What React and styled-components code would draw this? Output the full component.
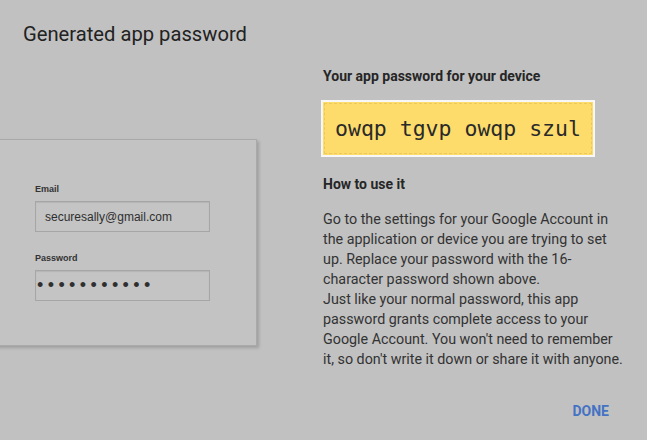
import React from 'react';
import styled, { createGlobalStyle } from 'styled-components';

const GlobalStyle = createGlobalStyle`
    html, body {
        margin: 0;
        padding: 0;
        background: #c1c1c1;
    }
    body {
        font-family: Roboto, "Liberation Sans", sans-serif;
    }
`;

const Page = styled.div`
    width: 647px;
    height: 440px;
    display: flex;
    overflow: hidden;
    background: #c1c1c1;
`;

const LeftCol = styled.div`
    width: 300px;
    padding-left: 23px;
    box-sizing: border-box;
    display: flex;
    flex-direction: column;
`;

const Title = styled.h1`
    margin: 22px 0 0;
    font-size: 20.2px;
    line-height: 24px;
    font-weight: 400;
    color: #222;
`;

const Card = styled.div`
    margin: 93px 0 0 -33px;
    width: 267px;
    height: 207px;
    box-sizing: border-box;
    padding: 43px 0 0 44px;
    background: #c3c3c3;
    border: 1px solid #a9a9a9;
    box-shadow: 2px 2px 3px rgba(0, 0, 0, 0.18);
    font-family: "Liberation Sans", Arial, sans-serif;
`;

const FieldLabel = styled.div`
    font-size: 9px;
    line-height: 12px;
    font-weight: 700;
    color: #333;
    margin-top: ${(p) => (p.first ? '0' : '20px')};
`;

const Field = styled.div`
    margin-top: 6px;
    width: 175px;
    height: 31px;
    box-sizing: border-box;
    padding-left: ${(p) => (p.dots ? '1px' : '9px')};
    display: flex;
    align-items: center;
    background: #c4c4c4;
    border: 1px solid #a6a6a6;
    box-shadow: inset 0 1px 1px rgba(0, 0, 0, 0.08);
    font-size: ${(p) => (p.dots ? '18px' : '12px')};
    letter-spacing: ${(p) => (p.dots ? '4.4px' : '0')};
    color: #2f2f2f;
`;

const RightCol = styled.div`
    flex: 1;
    padding-left: 23px;
    display: flex;
    flex-direction: column;
    color: #262626;
`;

const Heading = styled.div`
    font-size: 14px;
    line-height: 16px;
    font-weight: 700;
    color: #262626;
    margin-top: ${(p) => p.top}px;
`;

const PasswordBox = styled.div`
    margin: 16px 0 0 -2px;
    width: 274px;
    height: 57px;
    box-sizing: border-box;
    border: 2px solid #f7f7f7;
    background: #fddc6b;
    padding: 1px;
`;

const PasswordInner = styled.div`
    height: 100%;
    box-sizing: border-box;
    border: 1px dashed #ecc95c;
    display: flex;
    align-items: center;
    padding-left: 10px;
    font-family: "DejaVu Sans Mono", "Liberation Mono", monospace;
    font-size: 21.5px;
    color: #2a2a2a;
`;

const Body = styled.p`
    margin: 17px 0 0;
    width: 300.5px;
    font-size: 14.3px;
    line-height: 20px;
    color: #333;
`;

const Actions = styled.div`
    display: flex;
    justify-content: flex-end;
    padding-right: 38px;
    margin-top: 34px;
`;

const DoneButton = styled.button`
    border: 0;
    background: none;
    padding: 0;
    font-family: Roboto, "Liberation Sans", sans-serif;
    font-size: 14px;
    line-height: 16px;
    font-weight: 700;
    color: #4472c4;
    cursor: pointer;
`;

const App = () => {
    return (
        <>
            <GlobalStyle />
            <Page>
                <LeftCol>
                    <Title>Generated app password</Title>
                    <Card>
                        <FieldLabel first>Email</FieldLabel>
                        <Field>securesally@gmail.com</Field>
                        <FieldLabel>Password</FieldLabel>
                        <Field dots>•••••••••••</Field>
                    </Card>
                </LeftCol>
                <RightCol>
                    <Heading top={68}>Your app password for your device</Heading>
                    <PasswordBox>
                        <PasswordInner>owqp tgvp owqp szul</PasswordInner>
                    </PasswordBox>
                    <Heading top={19}>How to use it</Heading>
                    <Body>
                        Go to the settings for your Google Account in the application or device you are trying to set up. Replace your password with the 16-character password shown above.
                        <br />
                        Just like your normal password, this app password grants complete access to your Google Account. You won't need to remember it, so don't write it down or share it with anyone.
                    </Body>
                    <Actions>
                        <DoneButton>DONE</DoneButton>
                    </Actions>
                </RightCol>
            </Page>
        </>
    );
};

export default App;
